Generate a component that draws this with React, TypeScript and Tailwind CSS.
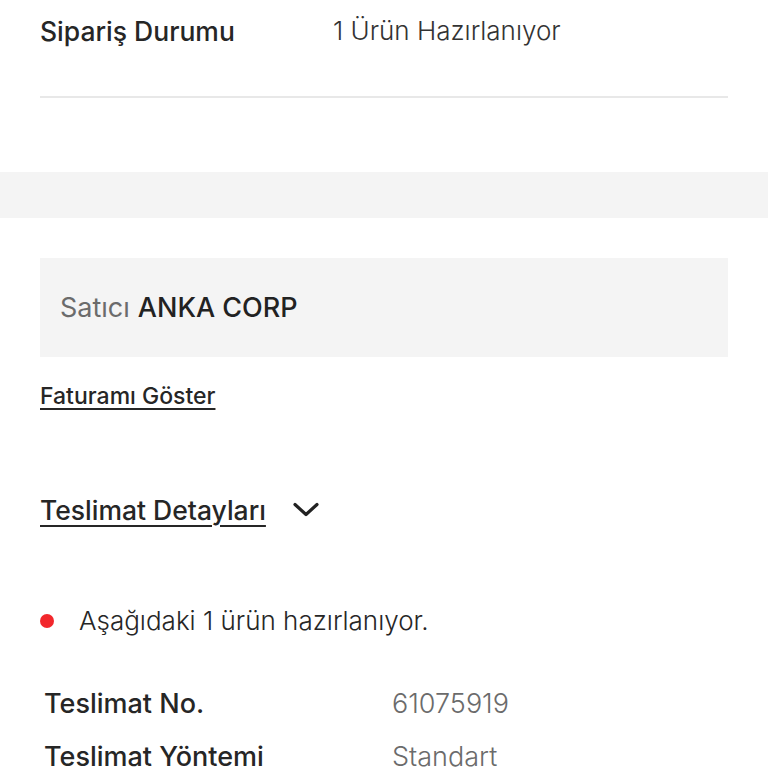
import React from "react";

export default function App() {
  return (
    <div className="w-[768px] h-[768px] overflow-hidden bg-white text-[#262626]" style={{ fontFamily: "Inter, 'Noto Sans', sans-serif" }}>
      <div className="px-[40px]">
        <div className="flex items-center h-[62px] leading-[32px]">
          <div className="w-[293px] text-[26.5px] font-medium">Sipariş Durumu</div>
          <div className="text-[26px] font-light text-[#333]">1 Ürün Hazırlanıyor</div>
        </div>
        <div className="mt-[34px] h-[2px] bg-[#e8e8e8]" />
      </div>
      <div className="mt-[74px] h-[46px] bg-[#f4f4f4]" />
      <div className="px-[40px] pt-[40px]">
        <div className="h-[99px] bg-[#f4f4f4] flex items-center px-[20px] text-[27px] leading-[32px]">
          <span className="text-[#6b6b6b] mr-[8px]">Satıcı</span>
          <span className="font-medium text-[#222]">ANKA CORP</span>
        </div>
        <div className="mt-[24px] text-[23px] font-medium underline underline-offset-[4px] decoration-[2px] leading-[30px]">
          Faturamı Göster
        </div>
        <div className="mt-[82px] flex items-center">
          <span className="text-[26.5px] font-medium underline underline-offset-[5px] decoration-[2px] leading-[34px]">
            Teslimat Detayları
          </span>
          <svg className="ml-[26px]" width="28" height="16" viewBox="0 0 28 16" fill="none">
            <path d="M3 2.5 L14 12.5 L25 2.5" stroke="#222" strokeWidth="3.2" strokeLinecap="round" strokeLinejoin="round" />
          </svg>
        </div>
        <div className="mt-[78px] flex items-center">
          <span className="w-[14px] h-[14px] rounded-full bg-[#f2272c]" />
          <span className="ml-[25px] text-[26px] font-light text-[#262626] leading-[32px]">Aşağıdaki 1 ürün hazırlanıyor.</span>
        </div>
        <div className="mt-[50px] pl-[4px] flex flex-col gap-[19px] text-[27px] leading-[34px]">
          <div className="flex items-center h-[34px]">
            <span className="w-[348px] font-medium">Teslimat No.</span>
            <span className="text-[#6b6b6b] font-light">61075919</span>
          </div>
          <div className="flex items-center h-[34px]">
            <span className="w-[348px] font-medium">Teslimat Yöntemi</span>
            <span className="text-[#6b6b6b] font-light">Standart</span>
          </div>
        </div>
      </div>
    </div>
  );
}
